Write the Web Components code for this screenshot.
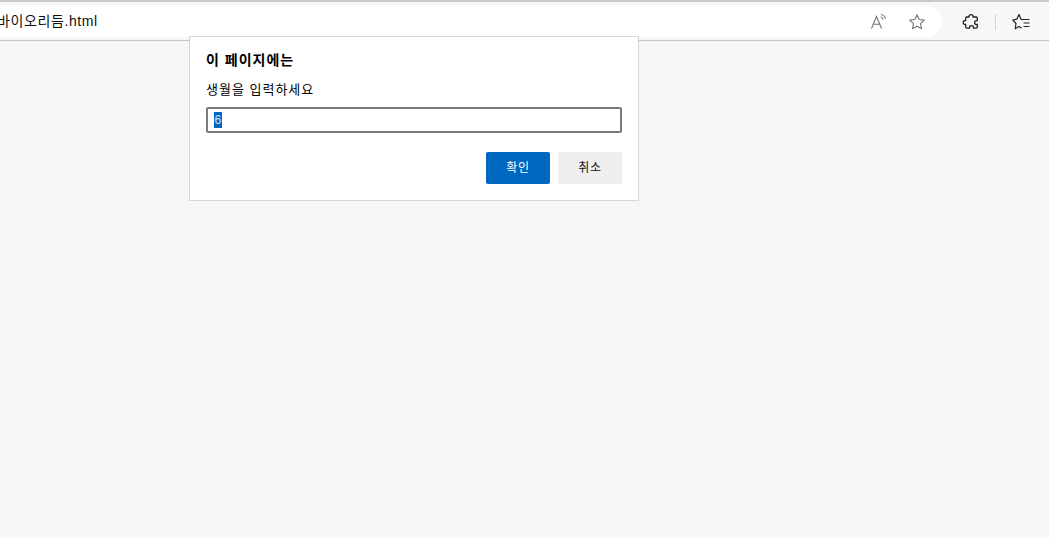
<!DOCTYPE html>
<html lang="ko"><head><meta charset="utf-8"><title>바이오리듬</title>
<style>
html,body{margin:0;padding:0;height:100%;overflow:hidden;background:#f7f7f7;font-family:"Liberation Sans","Noto Sans CJK KR",sans-serif}
</style></head><body>
<browser-window>
  <browser-toolbar slot="toolbar" address="바이오리듬.html"></browser-toolbar>
  <prompt-dialog title-text="이 페이지에는" message="생월을 입력하세요" value="6" ok="확인" cancel="취소"></prompt-dialog>
</browser-window>
<script>
class BrowserWindow extends HTMLElement{constructor(){super();this.attachShadow({mode:'open'}).innerHTML=`
<style>:host{display:flex;flex-direction:column;position:relative;width:1049px;height:538px;overflow:hidden;background:#f7f7f7}
.page{flex:1}</style><slot name="toolbar"></slot><div class="page"></div><slot></slot>`}}
class BrowserToolbar extends HTMLElement{constructor(){super();this.attachShadow({mode:'open'}).innerHTML=`
<style>:host{display:flex;align-items:center;box-sizing:border-box;height:41px;border-top:2px solid #c9c9c9;border-bottom:1px solid #c6c6c6;background:#f7f7f7;padding:2px 0 0}
.addr{display:flex;align-items:center;justify-content:space-between;width:942px;height:31px;margin-top:-1px;background:#fff;border-radius:0 16px 16px 0;box-sizing:border-box}
.url{font:14px/16px "Liberation Sans","Noto Sans CJK KR",sans-serif;color:#111;margin:-2px 0 0 -3px;letter-spacing:.6px}
.tools{display:flex;align-items:center;gap:20px;margin-right:16px}
.r{display:flex;align-items:center;flex:1;padding-left:20px}
.sep{width:1px;height:16px;background:#d4d4d4;margin:0 16px 0 15px}
svg{display:block}</style>
<div class="addr"><span class="url">${this.getAttribute('address')}</span>
<div class="tools">
<svg width="18" height="18" viewBox="0 0 18 18" fill="none" stroke-width="1.1"><path d="M1.500 15.500 6.500 3.500 11.500 15.500M3.400 11.200h6.200" stroke="#777"/><path d="M10.500 4c1.400.4 2.300 1.400 2.800 2.800M11 1.200c2.400.6 4 2.200 4.700 4.600" stroke="#888" stroke-width="1.100"/></svg>
<svg width="18" height="18" viewBox="0 0 18 18" fill="none" stroke="#777" stroke-width="1.100"><path d="M9 1.800l2.200 4.700 5.100.6-3.800 3.500 1 5.100L9 13.200l-4.500 2.500 1-5.100-3.800-3.500 5.100-.6z" stroke-linejoin="round"/></svg>
</div></div>
<div class="r">
<svg width="18" height="18" viewBox="0 0 18 18" fill="none" stroke="#222" stroke-width="1.300" stroke-linejoin="round"><path d="M7 3.200c0-2.200 4-2.200 4 0v.8h3.200c.7 0 1.100.4 1.100 1.100v2.600h-.9c-2.400 0-2.400 3.800 0 3.800h.9v2.600c0 .7-.4 1.100-1.100 1.100h-2.700v-.8c0-2.400-4-2.400-4 0v.8H4.800c-.7 0-1.100-.4-1.100-1.100v-2.600h-.6c-2.500 0-2.500-4 0-4h.6V5.100c0-.7.4-1.100 1.100-1.100H7z"/></svg>
<span class="sep"></span>
<svg width="18" height="18" viewBox="0 0 18 18" fill="none" stroke="#222" stroke-width="1.200" stroke-linejoin="round"><path d="M12 6.500H9.200L7 1.500 4.800 6.200.8 7 4 10.500l-.8 5.300L7 13.500l2.500 1.500"/><path d="M12 6.500h5.500M11.500 10h6M11.500 13.500h6"/></svg>
</div>`}}
class PromptDialog extends HTMLElement{constructor(){super();const a=n=>this.getAttribute(n);this.attachShadow({mode:'open'}).innerHTML=`
<style>:host{display:block;position:absolute;left:189px;top:36px;width:450px;height:165px;box-sizing:border-box;background:#fff;border:1px solid #d6d6d6;padding:15px 16px 0;color:#000;font-family:"Liberation Sans","Noto Sans CJK KR",sans-serif}
.t{font-size:14px;font-weight:700;line-height:17px;letter-spacing:1px}
.m{font-size:13px;line-height:16px;margin-top:13px;letter-spacing:1px}
.i{box-sizing:border-box;height:26px;margin-top:9px;border:2px solid #7a7a7a;border-radius:2px;background:#fff;display:flex;align-items:center;padding-left:6px;font-size:12px}
.i span{background:#0067c0;color:#cfe3f5;line-height:16px;padding:0 .5px}
.b{display:flex;justify-content:flex-end;gap:8px;margin-top:19px}
.btn{width:64px;height:32px;display:flex;align-items:center;justify-content:center;font-size:12px;box-sizing:border-box;padding-bottom:3px;letter-spacing:.8px}
.ok{background:#0067c0;color:#fff;border-radius:2px}.no{background:#efefef;color:#111}</style>
<div class="t">${a('title-text')}</div><div class="m">${a('message')}</div>
<div class="i"><span>${a('value')}</span></div>
<div class="b"><div class="btn ok">${a('ok')}</div><div class="btn no">${a('cancel')}</div></div>`}}
customElements.define('browser-window',BrowserWindow);customElements.define('browser-toolbar',BrowserToolbar);customElements.define('prompt-dialog',PromptDialog);
</script></body></html>
